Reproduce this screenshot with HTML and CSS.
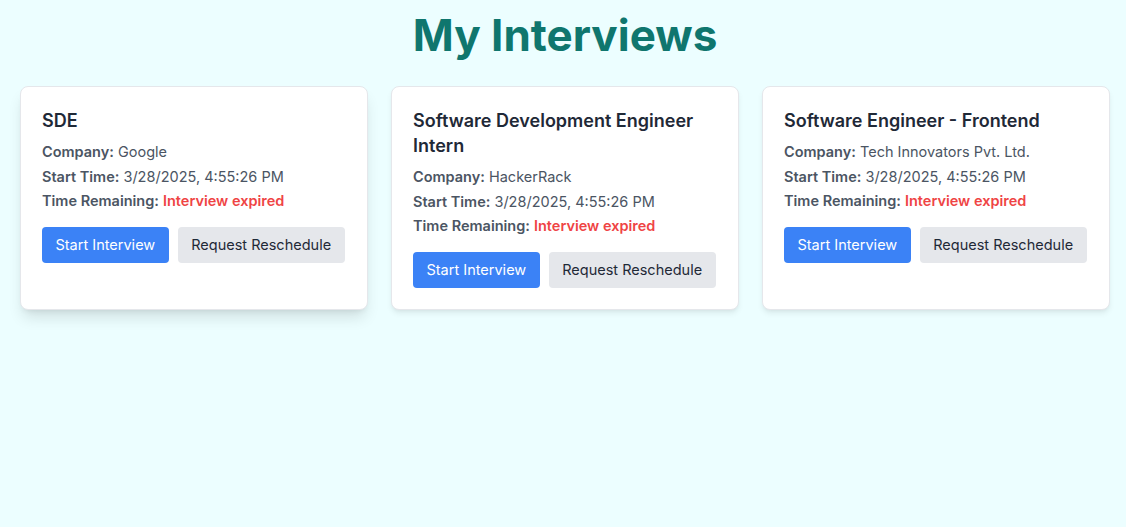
FILE: index.html
```html
<!DOCTYPE html>
<html lang="en">
<head>
<meta charset="utf-8">
<title>My Interviews</title>
<link rel="stylesheet" href="styles.css">
</head>
<body>
<main class="page">
  <h1 class="page-title">My Interviews</h1>
  <section class="grid">
    <article class="card raised">
      <h2 class="card-title">SDE</h2>
      <p class="row"><span class="label">Company:</span> Google</p>
      <p class="row"><span class="label">Start Time:</span> 3/28/2025, 4:55:26 PM</p>
      <p class="row"><span class="label">Time Remaining:</span> <span class="expired">Interview expired</span></p>
      <div class="actions">
        <button class="btn btn-primary">Start Interview</button>
        <button class="btn btn-secondary">Request Reschedule</button>
      </div>
    </article>
    <article class="card">
      <h2 class="card-title">Software Development Engineer Intern</h2>
      <p class="row"><span class="label">Company:</span> HackerRack</p>
      <p class="row"><span class="label">Start Time:</span> 3/28/2025, 4:55:26 PM</p>
      <p class="row"><span class="label">Time Remaining:</span> <span class="expired">Interview expired</span></p>
      <div class="actions">
        <button class="btn btn-primary">Start Interview</button>
        <button class="btn btn-secondary">Request Reschedule</button>
      </div>
    </article>
    <article class="card">
      <h2 class="card-title">Software Engineer - Frontend</h2>
      <p class="row"><span class="label">Company:</span> Tech Innovators Pvt. Ltd.</p>
      <p class="row"><span class="label">Start Time:</span> 3/28/2025, 4:55:26 PM</p>
      <p class="row"><span class="label">Time Remaining:</span> <span class="expired">Interview expired</span></p>
      <div class="actions">
        <button class="btn btn-primary">Start Interview</button>
        <button class="btn btn-secondary">Request Reschedule</button>
      </div>
    </article>
  </section>
</main>
</body>
</html>
```

FILE: styles.css
```css
* { box-sizing: border-box; }
html, body {
  margin: 0;
  background: #ecfeff;
  font-family: Inter, "Noto Sans", sans-serif;
  color: #1f2937;
}
.page {
  padding: 9px 16px 20px 20px;
}
.page-title {
  margin: 0 0 25px;
  text-align: center;
  font-size: 44px;
  line-height: 52px;
  font-weight: 700;
  color: #0f766e;
}
.grid {
  display: grid;
  grid-template-columns: repeat(3, minmax(0, 1fr));
  gap: 23px;
}
.card {
  background: #fff;
  border: 1px solid #e5e7eb;
  border-radius: 8px;
  padding: 21px 21px 21px;
  box-shadow: 0 4px 6px -1px rgba(0,0,0,0.08), 0 2px 4px -2px rgba(0,0,0,0.06);
}
.card.raised {
  box-shadow: 0 10px 15px -3px rgba(0,0,0,0.12), 0 4px 6px -4px rgba(0,0,0,0.1);
}
.card-title {
  margin: 0 0 7px;
  font-size: 18px;
  line-height: 25px;
  font-weight: 600;
  color: #1f2937;
}
.row {
  margin: 0;
  font-size: 14.5px;
  line-height: 24.6px;
  color: #4b5563;
}
.label {
  font-weight: 600;
}
.expired {
  color: #ef4444;
  font-weight: 600;
}
.actions {
  display: flex;
  gap: 9px;
  margin-top: 13px;
}
.btn {
  height: 36px;
  padding: 0 13.5px;
  border: none;
  border-radius: 4px;
  font-family: inherit;
  font-size: 14.5px;
  white-space: nowrap;
}
.btn-primary {
  background: #3b82f6;
  color: #fff;
}
.btn-secondary {
  background: #e5e7eb;
  color: #1f2937;
}
```
